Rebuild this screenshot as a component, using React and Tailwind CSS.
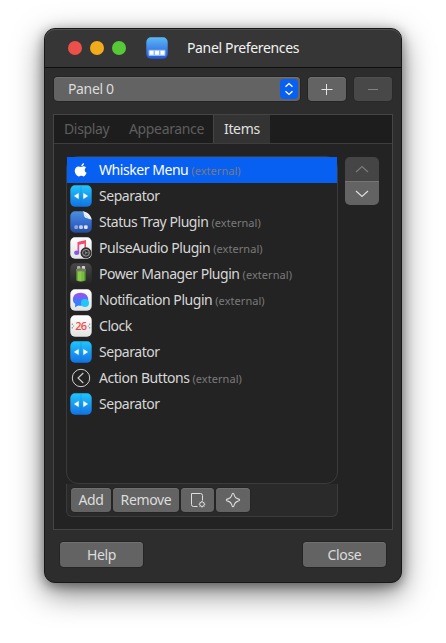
import React from 'react';

const rows = [
  ['apple', 'Whisker Menu', true],
  ['separator', 'Separator', false],
  ['tray', 'Status Tray Plugin', true],
  ['audio', 'PulseAudio Plugin', true],
  ['power', 'Power Manager Plugin', true],
  ['chat', 'Notification Plugin', true],
  ['clock', 'Clock', false],
  ['separator', 'Separator', false],
  ['action', 'Action Buttons', true],
  ['separator', 'Separator', false],
];

function Gradients() {
  return (
    <svg className="absolute h-0 w-0" aria-hidden="true">
      <defs>
        <linearGradient id="cyan" x1="0" y1="0" x2="0" y2="1"><stop stopColor="#20c5fb" /><stop offset="1" stopColor="#1272e4" /></linearGradient>
        <linearGradient id="blue" x1="0" y1="0" x2="0" y2="1"><stop stopColor="#5cb8f5" /><stop offset="1" stopColor="#2457dc" /></linearGradient>
        <linearGradient id="tray" x1="0" y1="0" x2="0" y2="1"><stop stopColor="#4a8fdc" /><stop offset=".6" stopColor="#3266cc" /><stop offset="1" stopColor="#2a4b98" /></linearGradient>
        <linearGradient id="note" gradientUnits="userSpaceOnUse" x1="14" y1="3" x2="6" y2="18"><stop stopColor="#f9485e" /><stop offset=".55" stopColor="#e8508e" /><stop offset="1" stopColor="#7b55e8" /></linearGradient>
        <linearGradient id="dark" x1="0" y1="0" x2="0" y2="1"><stop stopColor="#484848" /><stop offset="1" stopColor="#242424" /></linearGradient>
        <linearGradient id="green" x1="0" y1="0" x2="1" y2="0"><stop stopColor="#58992a" /><stop offset=".4" stopColor="#91cf50" /><stop offset="1" stopColor="#4f9023" /></linearGradient>
        <linearGradient id="bubble" x1="0" y1="0" x2="0" y2="1"><stop stopColor="#a44fe8" /><stop offset=".55" stopColor="#4a76fa" /><stop offset="1" stopColor="#188bff" /></linearGradient>
        <linearGradient id="white" x1="0" y1="0" x2="0" y2="1"><stop stopColor="#ffffff" /><stop offset="1" stopColor="#e2e2e2" /></linearGradient>
      </defs>
    </svg>
  );
}

function RowIcon({ name }) {
  const box = (fill) => <rect x=".3" y=".3" width="21.4" height="21.4" rx="4.6" fill={fill} />;
  return (
    <svg viewBox="0 0 22 22" className="h-[22px] w-[22px] shrink-0">
      {name === 'apple' && (
        <g fill="#fff" transform="translate(.8 1.300) scale(.92)">
          <path d="M11.400 7.400c1-.6 2-.9 2.900-.8 1 .1 1.900.6 2.400 1.300-2.300 1.500-1.900 4.600.4 5.600-.5 1.600-1.700 3.900-3.200 4-1 0-1.400-.6-2.500-.6s-1.500.6-2.500.6C6.500 17.400 4.300 14 4.300 11.300c0-2.700 1.900-4.600 4-4.600 1.200 0 2.200.5 3.100.7z" />
          <path d="M11.300 6.500c0-1.900 1.300-3.400 3-3.700.2 1.900-1.200 3.600-3 3.700z" />
        </g>
      )}
      {name === 'separator' && (
        <>
          {box('url(#cyan)')}
          <path d="M10.500 1h1v20h-1z" fill="#0b6fc8" opacity=".3" />
          <path d="M8.500 8.300v5.400L4.300 11zM13.500 8.300v5.400l4.200-2.700z" fill="#fff" stroke="#fff" strokeWidth=".4" strokeLinejoin="round" />
        </>
      )}
      {name === 'tray' && (
        <>
          <path d="M5 .3h8.500L21.700 8v9a4.700 4.700 0 0 1-4.700 4.700H5A4.700 4.700 0 0 1 .3 17V5A4.700 4.700 0 0 1 5 .3z" fill="url(#tray)" />
          <path d="M13 .3c1 1.500.7 4 1.500 5.500s4 1.900 7.200 2.700C21 4.500 17.500 1 13 .3z" fill="#e6f1f8" />
          <path d="M14.500 3.500l4 4" stroke="#b9cfdf" strokeWidth=".8" />
          <rect x="4.300" y="14.300" width="3.800" height="3.800" rx="1.400" fill="#8fa5dc" />
          <rect x="9.100" y="14.300" width="3.800" height="3.800" rx="1.400" fill="#c5cfec" />
          <rect x="13.900" y="14.300" width="3.800" height="3.800" rx="1.400" fill="#dde4f6" />
        </>
      )}
      {name === 'audio' && (
        <>
          {box('url(#white)')}
          <path d="M7.500 5l8.500-2v3.200L9.200 7.800v7.700H7.500z" fill="url(#note)" />
          <path d="M14.400 4H16v8h-1.600z" fill="#f0506e" />
          <ellipse cx="6.700" cy="15.700" rx="2.600" ry="2.200" fill="#8558e4" />
          <circle cx="16" cy="15.800" r="5.500" fill="#303030" />
          <circle cx="16" cy="15.800" r="3.400" fill="none" stroke="#999" strokeWidth="1" />
          <circle cx="16" cy="15.800" r=".8" fill="#aaa" />
          <path d="M16 15.800h3M16 15.800l-1.700-3M16 15.800l-1.700 3" stroke="#888" strokeWidth=".7" fill="none" />
        </>
      )}
      {name === 'power' && (
        <>
          {box('url(#dark)')}
          <rect x="7" y="3" width="3.400" height="3.500" rx="1" fill="#b0b0a8" />
          <rect x="11.700" y="3" width="3.400" height="3.500" rx="1" fill="#d4d4cb" />
          <path d="M6.300 6h9.400v11.500q-4.700 2-9.400 0z" fill="url(#green)" />
          <path d="M6.300 7.800V6q4.700-1.500 9.400 0v1.800q-4.700 1-9.400 0z" fill="#75796c" />
          <path d="M8.600 9v8M13.300 9v8" stroke="#b9e581" strokeWidth=".6" opacity=".6" />
        </>
      )}
      {name === 'chat' && (
        <>
          {box('url(#white)')}
          <path d="M10.500 3.700c4.500 0 7.700 2.800 7.700 6.500s-3.200 6.500-7.700 6.500c-.8 0-1.500-.1-2.200-.3L5 18.300l.2-3.300C3.600 13.900 2.900 12.200 2.900 10.200c0-3.700 3.100-6.500 7.600-6.500z" fill="url(#bubble)" />
          <circle cx="15" cy="14" r="4" fill="#20c8fa" />
        </>
      )}
      {name === 'clock' && (
        <>
          {box('url(#white)')}
          <path d="M2.300 8.500v1.500M2.300 12v1.500M3.700 10.500v1M19.700 8.500v1.500M19.700 12v1.500M18.300 10.500v1" stroke="#888" strokeWidth="1" />
          <text x="11" y="15" textAnchor="middle" fontSize="11" fontFamily="Noto Sans, sans-serif" fontWeight="500" fill="#f2443b" textLength="11.500">26</text>
        </>
      )}
      {name === 'action' && (
        <g fill="none" stroke="#d0d0d0">
          <circle cx="11" cy="11" r="8.700" strokeWidth="1" />
          <path d="M13.300 6L8 11l5.300 5" strokeWidth="1.100" />
        </g>
      )}
    </svg>
  );
}

const button = 'flex items-center rounded-[4px] bg-[#636363] text-[#dcdcdc] shadow-[inset_0_1px_0_#707070,0_0_0_1px_#252525]';

export default function App() {
  return (
    <div className="h-[643px] w-[446px] overflow-hidden bg-white px-[44px] pt-[28px] font-['Noto_Sans',sans-serif] text-[14px] leading-[18px] tracking-[-0.35px] text-[#d7d7d7]">
      <Gradients />
      <div className="flex h-[555px] w-[358px] flex-col rounded-[11px] border border-[#181818] bg-[#2d2d2d] shadow-[0_10px_30px_rgba(0,0,0,0.5),0_3px_12px_rgba(0,0,0,0.4)]">
        <header className="flex h-[39px] shrink-0 items-center rounded-t-[10px] border-b border-[#0f0f0f] bg-[#363636] pl-[23px] shadow-[inset_0_1px_0_#515151]">
          <div className="flex gap-2">
            <span className="h-[14px] w-[14px] rounded-full bg-[#ec5049]" />
            <span className="h-[14px] w-[14px] rounded-full bg-[#f2ac1b]" />
            <span className="h-[14px] w-[14px] rounded-full bg-[#57c836]" />
          </div>
          <svg viewBox="0 0 22 22" className="ml-5 h-[22px] w-[22px]">
            <rect x=".3" y=".3" width="21.400" height="21.400" rx="4.600" fill="url(#blue)" />
            <rect x="2.500" y="12.800" width="17" height="6.200" rx="1" fill="#8ebcf8" />
            <path d="M3.500 13.800h4v4h-4zM9 13.800h4v4H9zM14.500 13.800h4v4h-4z" fill="#fff" />
          </svg>
          <span className="ml-[19px] whitespace-nowrap text-[#f2f2f2]">Panel Preferences</span>
        </header>

        <div className="mt-[9px] flex h-6 shrink-0 gap-2 pl-[9px]">
          <div className={`${button} w-[246px] justify-between pl-[14px] pr-[2px]`}>
            <span>Panel 0</span>
            <span className="flex h-5 w-[18px] items-center justify-center rounded-[4px] bg-[#0860f2]">
              <svg viewBox="0 0 18 20" className="h-5 w-[18px]" fill="none" stroke="#fff" strokeWidth="1.400"><path d="M5.500 7.800L9 4.600l3.500 3.200M5.500 12.200L9 15.400l3.500-3.200" /></svg>
            </span>
          </div>
          <div className={`${button} w-[38px] justify-center`}>
            <svg viewBox="0 0 12 12" className="h-3 w-3" stroke="#e4e4e4"><path d="M.5 6.500h11M5.500 1v11" /></svg>
          </div>
          <div className="flex w-[38px] items-center justify-center rounded-[4px] bg-[#484848] shadow-[inset_0_1px_0_#505050,0_0_0_1px_#292929]">
            <svg viewBox="0 0 12 12" className="h-3 w-3" stroke="#838383"><path d="M1 6.500h10" /></svg>
          </div>
        </div>

        <main className="ml-2 mt-[13px] h-[416px] w-[340px] shrink-0 border border-[#454545] bg-[#232323]">
          <nav className="flex h-[29px] border-b border-[#3d3d3d] bg-[#1d1d1d] text-[#5e5e5e]">
            <span className="flex w-[65px] items-center pl-[10px]">Display</span>
            <span className="flex w-[94px] items-center pl-[10px]">Appearance</span>
            <span className="flex w-[57px] items-center border-l border-[#454545] bg-[#333333] pl-[10px] text-[#e0e0e0]">Items</span>
          </nav>
          <div className="flex gap-[7px] pl-3 pt-3">
            <section className="w-[272px]">
              <div className="h-[328px] rounded-[12px] border border-[#3b3b3b]">
                {rows.map(([icon, label, external], i) => (
                  <div key={i} className={`flex h-[26px] items-center whitespace-nowrap pl-[3px] ${i === 0 ? 'bg-[#0860f2] text-white' : ''}`}>
                    <RowIcon name={icon} />
                    <span className="ml-[7px] tracking-[-0.45px]">{label}</span>
                    {external && <span className="ml-[3px] mt-[2px] text-[11px] tracking-[0.05px] text-[#7a7a7a]">(external)</span>}
                  </div>
                ))}
              </div>
              <div className="flex h-[33px] gap-[2px] rounded-b-[6px] border border-t-0 border-[#3b3b3b] bg-[#2a2a2a] pl-1 pt-1">
                <div className={`${button} h-6 w-[40px] justify-center`}>Add</div>
                <div className={`${button} h-6 w-[66px] justify-center`}>Remove</div>
                <div className={`${button} h-6 w-[33px] justify-center`}>
                  <svg viewBox="0 0 16 16" className="ml-px h-4 w-4" fill="none" stroke="#dedede" strokeWidth="1">
                    <path d="M7.500 14.500h-4q-2 0-2-2V1.500h9q2 0 2 2v5" />
                    <circle cx="12" cy="12.200" r="2.300" />
                    <path d="M12 8.900v1M12 14.500v1M8.700 12.200h1M14.300 12.200h1M9.700 9.900l.7.700M13.600 13.800l.7.700M9.700 14.500l.7-.7M13.600 10.600l.7-.7" />
                  </svg>
                </div>
                <div className={`${button} h-6 w-[34px] justify-center`}>
                  <svg viewBox="0 0 16 16" className="h-4 w-4" fill="none" stroke="#dedede" strokeWidth="1.100" strokeLinejoin="round"><path d="M8 1.300q.9 0 1.400 2.300.7 2.300 3 3Q14.700 7.200 14.700 8t-2.300 1.400q-2.300.7-3 3Q8.900 14.700 8 14.700t-1.400-2.300q-.7-2.300-3-3Q1.300 8.900 1.300 8t2.300-1.400q2.300-.7 3-3Q7.100 1.300 8 1.300z" /></svg>
                </div>
              </div>
            </section>
            <div className="mt-px flex h-12 w-[34px] flex-col overflow-hidden rounded-[5px]">
              <span className="flex h-6 items-center justify-center bg-[#454545]">
                <svg viewBox="0 0 14 8" className="h-2 w-[14px]" fill="none" stroke="#7b7b7b" strokeWidth="1.200"><path d="M1 7l6-5.500L13 7" /></svg>
              </span>
              <span className="flex h-6 items-center justify-center border-t border-[#747474] bg-[#636363]">
                <svg viewBox="0 0 14 8" className="h-2 w-[14px]" fill="none" stroke="#dedede" strokeWidth="1.200"><path d="M1 1l6 5.500L13 1" /></svg>
              </span>
            </div>
          </div>
        </main>
        <footer className="mt-3 flex justify-between pl-[15px] pr-[15px]">
          <div className={`${button} h-[25px] w-[83px] justify-center`}>Help</div>
          <div className={`${button} h-[25px] w-[83px] justify-center`}>Close</div>
        </footer>
      </div>
    </div>
  );
}
